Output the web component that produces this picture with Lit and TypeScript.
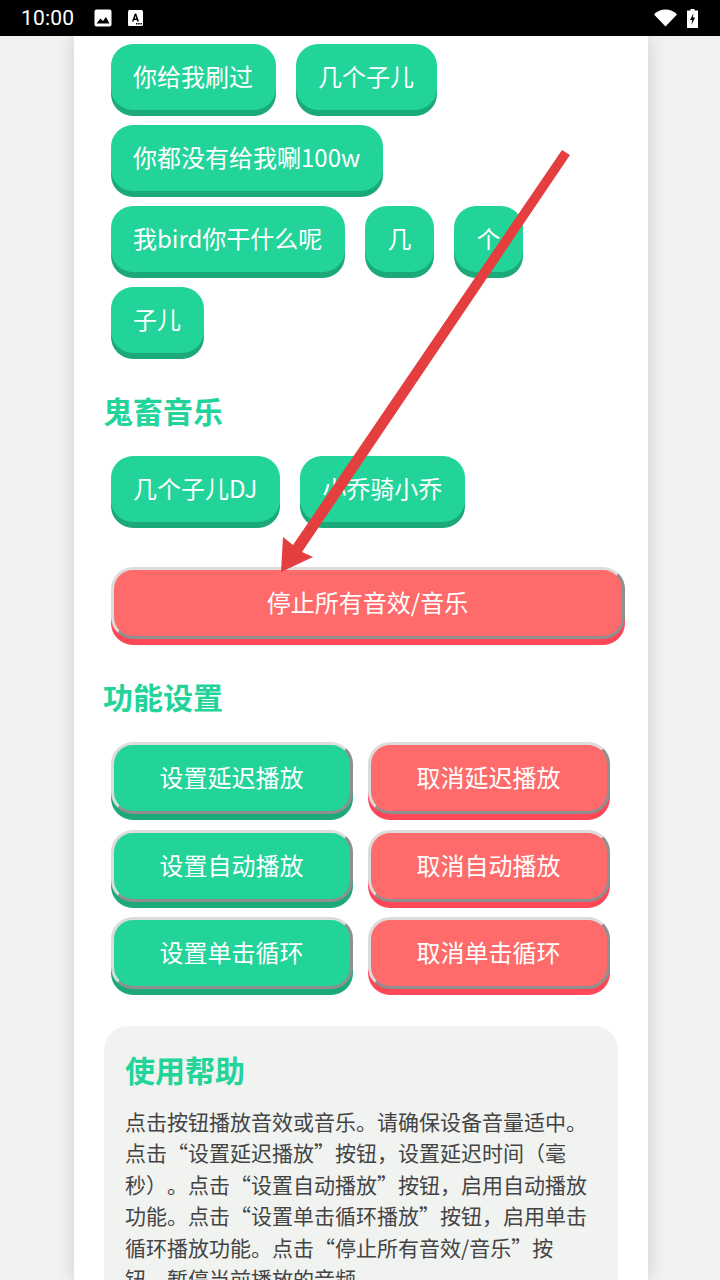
import { LitElement, html, css } from "lit";
import { customElement } from "lit/decorators.js";

@customElement("app-root")
export class AppRoot extends LitElement {
  static styles = css`
    :host {
      display: block;
      position: relative;
      width: 720px;
      height: 1280px;
      overflow: hidden;
      background: #f1f3f1;
      font-family: "Noto Sans CJK SC", sans-serif;
      text-spacing-trim: space-all;
    }
    .status {
      height: 36px;
      background: #000;
      display: flex;
      align-items: center;
      padding: 0 22px 0 21px;
      color: #fff;
      font-family: Roboto, sans-serif;
      font-size: 21px;
      box-sizing: border-box;
    }
    .time { width: 73px; letter-spacing: 0.2px; }
    .status svg { display: block; }
    .i-a { margin-left: 16px; }
    .spacer { flex: 1; }
    .i-bat { margin-left: 10px; }
    .card {
      width: 574px;
      margin-left: 74px;
      box-sizing: border-box;
      height: 1244px;
      padding: 8px 30px 0;
      background: #fff;
      box-shadow: 0 0 18px rgba(0, 0, 0, 0.16);
    }
    .group {
      display: flex;
      flex-wrap: wrap;
      gap: 15px 20px;
      padding-left: 7px;
    }
    button {
      font-family: inherit;
      color: #fff;
      font-size: 24px;
      cursor: pointer;
      box-sizing: border-box;
      margin: 0;
      text-spacing-trim: space-all;
    }
    .pill {
      height: 66px;
      padding: 0 23px 4px 22px;
      border: none;
      border-radius: 22px;
      background: #22d499;
      box-shadow: 0 6px 0 #1ba97c;
    }
    h2 {
      font-size: 30px;
      line-height: 43px;
      font-weight: 700;
      color: #22d499;
    }
    .h1 { margin: 36px 0 24px -1px; }
    .h2 { margin: 36px 0 24px -1px; }
    .raised {
      height: 72px;
      padding: 0 6px 3px 5px;
      border-style: solid;
      border-width: 3px;
      border-color: #dcdcdc #8f8f8f #8f8f8f #dcdcdc;
      border-radius: 22px;
    }
    .stop {
      display: block;
      width: 100%;
      margin: 45px 0 0 7px;
      background: #ff6b6b;
      box-shadow: 0 6px 0 #ff4757;
    }
    .grid {
      display: grid;
      grid-template-columns: 242px 242px;
      gap: 15.5px 15px;
      padding-left: 7px;
    }
    .go { background: #22d499; box-shadow: 0 6px 0 #1ba97c; }
    .no { background: #ff6b6b; box-shadow: 0 6px 0 #ff4757; }
    .help {
      margin-top: 37px;
      padding: 20.5px 23px 22px 21px;
      background: #f1f3f1;
      border-radius: 24px;
      height: 400px;
      box-sizing: border-box;
    }
    .help h3 {
      margin: 0 0 14px;
      font-size: 30px;
      line-height: 45px;
      font-weight: 700;
      color: #22d499;
    }
    .help p {
      margin: 0;
      font-size: 21px;
      line-height: 31.5px;
      color: #444;
    }
    .arrow {
      position: absolute;
      left: 0;
      top: 0;
      pointer-events: none;
    }
  `;

  private pill(t: string) {
    return html`<button class="pill">${t}</button>`;
  }

  render() {
    return html`
      <div class="status">
        <span class="time">10:00</span>
        <svg width="18" height="18" viewBox="0 0 18 18">
          <rect x="0.5" y="0.5" width="17" height="17" rx="2" fill="#fff"/>
          <path d="M2.5 14.5 L6.5 9.5 L9 12 L12 8 L15.5 14.5 Z" fill="#000"/>
        </svg>
        <svg class="i-a" width="15" height="16" viewBox="0 0 15 16">
          <rect x="0" y="0" width="15" height="16" rx="1.5" fill="#fff"/>
          <path d="M4 11.5 L6.8 3.5 H8.2 L11 11.5 H9.3 L8.8 10 H6.2 L5.7 11.5 Z M6.7 8.6 H8.3 L7.5 6 Z" fill="#000"/>
          <rect x="8" y="13" width="1.5" height="1.5" fill="#000"/>
          <rect x="10.2" y="13" width="1.5" height="1.5" fill="#000"/>
          <rect x="12.4" y="13" width="1.5" height="1.5" fill="#000"/>
        </svg>
        <span class="spacer"></span>
        <svg width="23" height="18" viewBox="0 0 23 18">
          <path d="M0 5.5 C6 -1.2 17 -1.2 23 5.5 L11.5 17.5 Z" fill="#fff"/>
        </svg>
        <svg class="i-bat" width="11" height="19" viewBox="0 0 11 19">
          <path d="M3.5 0 H7.5 V1.5 H11 V19 H0 V1.5 H3.5 Z" fill="#fff"/>
          <path d="M6.5 4 L3 11 H5.2 L4.5 16 L8 8.5 H5.8 Z" fill="#000"/>
        </svg>
      </div>
      <div class="card">
        <div class="group">
          ${["你给我刷过", "几个子儿", "你都没有给我唰100w", "我bird你干什么呢", "几", "个", "子儿"].map((t) => this.pill(t))}
        </div>
        <h2 class="h1">鬼畜音乐</h2>
        <div class="group">
          ${["几个子儿DJ", "小乔骑小乔"].map((t) => this.pill(t))}
        </div>
        <button class="raised stop">停止所有音效/音乐</button>
        <h2 class="h2">功能设置</h2>
        <div class="grid">
          <button class="raised go">设置延迟播放</button>
          <button class="raised no">取消延迟播放</button>
          <button class="raised go">设置自动播放</button>
          <button class="raised no">取消自动播放</button>
          <button class="raised go">设置单击循环</button>
          <button class="raised no">取消单击循环</button>
        </div>
        <div class="help">
          <h3>使用帮助</h3>
          <p>点击按钮播放音效或音乐。请确保设备音量适中。点击“设置延迟播放”按钮，设置延迟时间（毫秒）。点击“设置自动播放”按钮，启用自动播放功能。点击“设置单击循环播放”按钮，启用单击循环播放功能。点击“停止所有音效/音乐”按钮，暂停当前播放的音频。</p>
        </div>
      </div>
      <svg class="arrow" width="720" height="1280" viewBox="0 0 720 1280">
        <path d="M562 150 L570 155 L302 552 L313 557 L281 572 L283 537 L293 545 Z" fill="#e53e3e"/>
      </svg>
    `;
  }
}
